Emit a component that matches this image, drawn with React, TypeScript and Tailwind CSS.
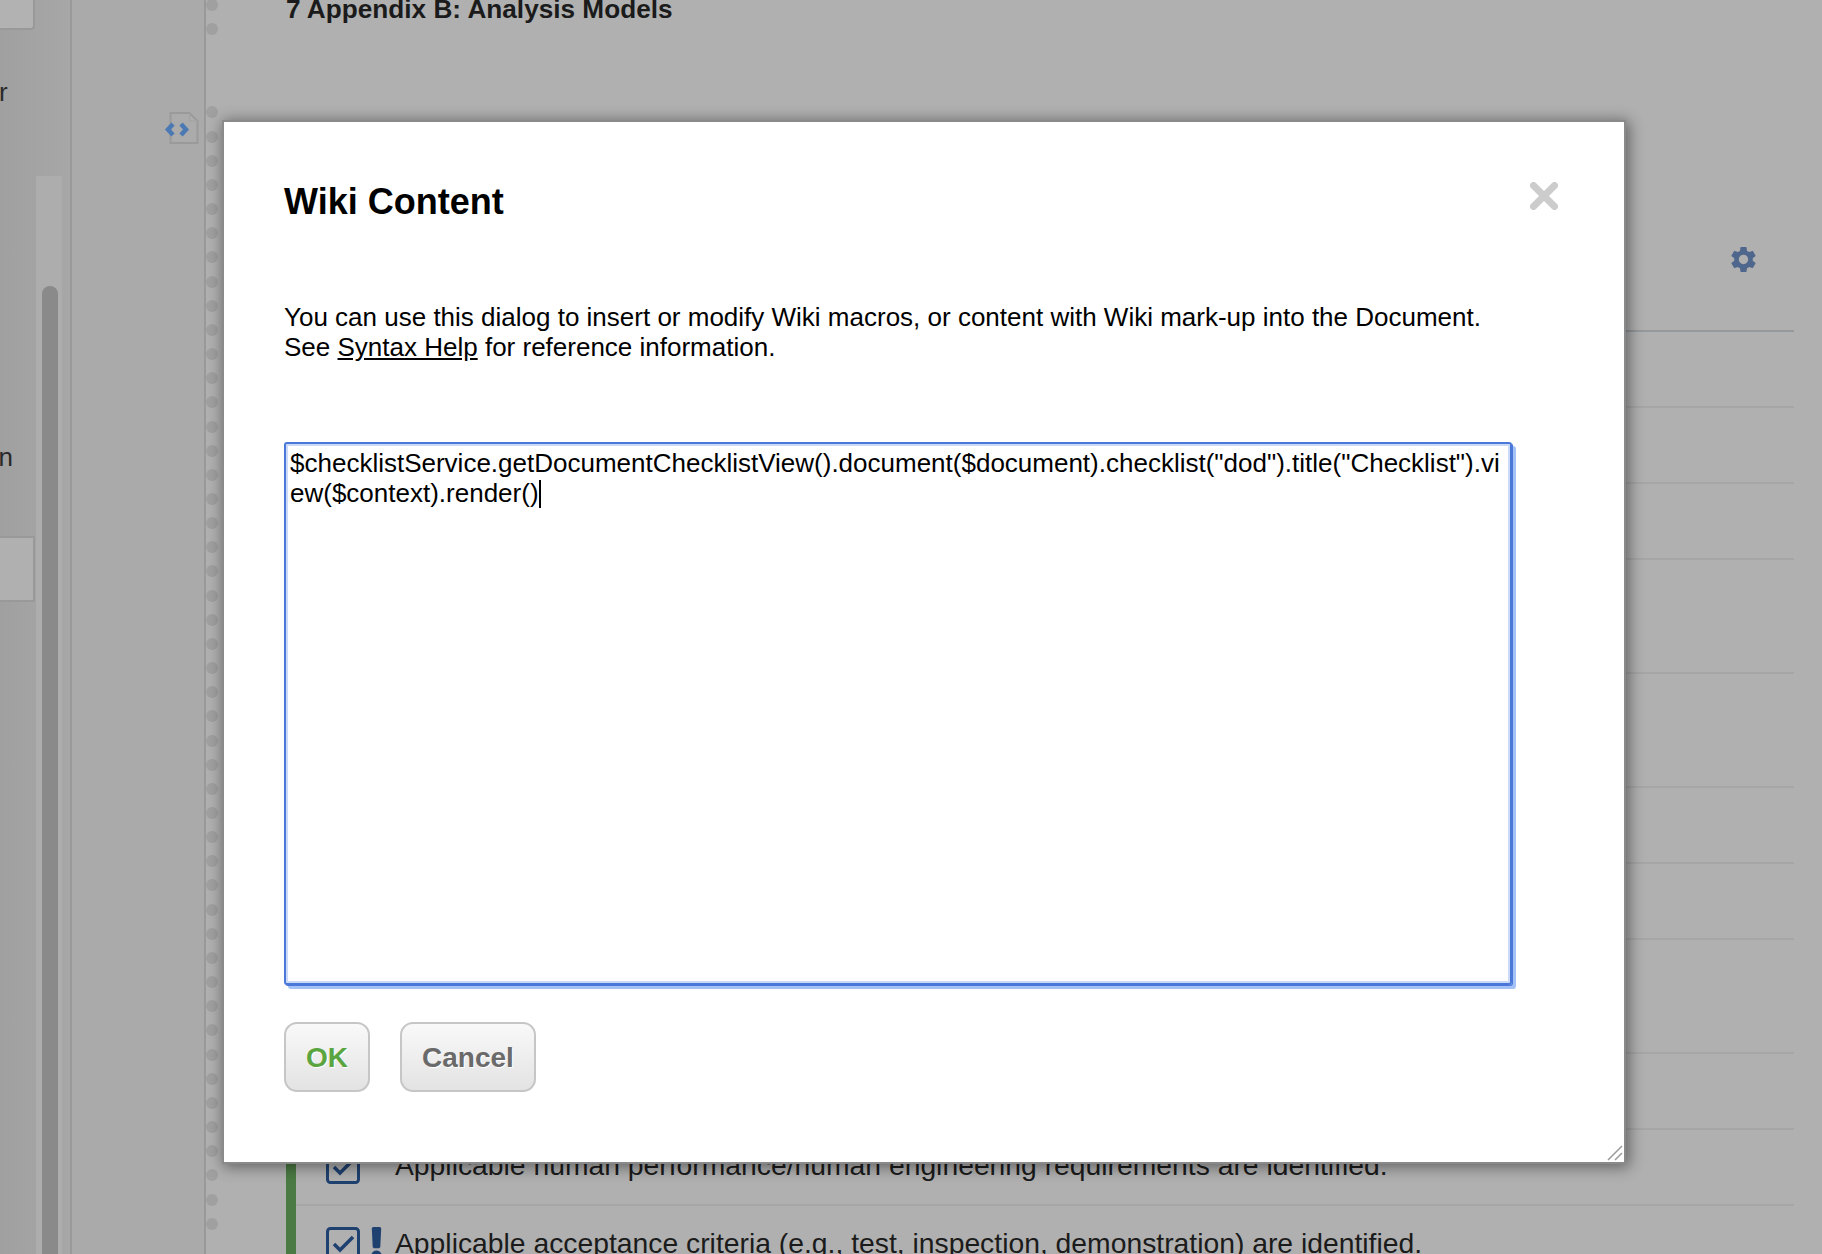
import { FaExclamation } from 'react-icons/fa'
import { MdSettings } from 'react-icons/md'

const FONT = "font-['Liberation_Sans',Arial,sans-serif]"

const topDots = [0, 1]
const dots = Array.from({ length: 47 }, (_, i) => i)

// row heights of the checklist behind the dialog
const rowClasses = [
  'h-[76px]',
  'h-[76px]',
  'h-[76px]',
  'h-[114px]',
  'h-[114px]',
  'h-[76px]',
  'h-[76px]',
  'h-[114px]',
  'h-[76px]',
]

function Check() {
  return (
    <svg viewBox="0 0 34 34" className="h-[34px] w-[34px] shrink-0" fill="none">
      <rect x="1.5" y="1.5" width="31" height="31" rx="3" stroke="#1f4170" strokeWidth="3" />
      <path d="M8 17l6 6L27 10" stroke="#1f4170" strokeWidth="3.5" />
    </svg>
  )
}

function Background() {
  return (
    <div className="flex h-full w-full">
      {/* left navigation panel */}
      <div className="relative w-[70px] shrink-0 bg-gradient-to-r from-[#a0a0a0] to-[#a7a7a7] text-[#2a2a2a]">
        <div className="h-[30px] w-[35px] rounded-br-sm border-r-2 border-b-2 border-[#999999] bg-[#b2b2b2]" />
        <div className="-ml-[1px] mt-[47px] h-[30px] w-[12px] overflow-hidden text-[26px] leading-[30px]">r</div>
        <div className="-ml-[6px] mt-[335px] h-[30px] w-[19px] overflow-hidden text-right text-[26px] leading-[30px]">n</div>
        <div className="mt-[64px] h-[66px] w-[35px] border-y-2 border-r-2 border-[#999999] bg-[#b0b0b0]" />
        {/* scroll track */}
        <div className="absolute bottom-0 left-[36px] top-[176px] w-[26px] bg-[#adadad] pl-[6px] pr-[4px] pt-[110px]">
          <div className="h-full rounded-t-lg bg-[#8a8a8a]" />
        </div>
      </div>

      {/* sidebar */}
      <div className="relative w-[136px] shrink-0 border-l-2 border-r-2 border-[#999999] bg-[#aaaaaa]">
        <svg viewBox="0 0 36 36" className="absolute left-[92px] top-[110px] h-[36px] w-[36px]" fill="none">
          <path d="M6.500 3h19l8 8v22h-27z" fill="#ababab" stroke="#9a9a9a" strokeWidth="2" />
          <path d="M25.500 3v8h8" stroke="#a2a2a2" strokeWidth="1" />
          <path d="M9 14l-5 5.500 5 5.500M17 14l5 5.500-5 5.500" stroke="#4b79b4" strokeWidth="4.500" />
        </svg>
      </div>

      {/* page margin with punched holes */}
      <div className="w-[18px] shrink-0 bg-[#b0b0b0] pr-[6px]">
        <div className="-mt-[1px] flex flex-col items-center gap-[12.17px]">
          {topDots.map((d) => (
            <div key={d} className="h-3 w-3 shrink-0 rounded-full bg-[#a0a0a0]" />
          ))}
          <div className="h-[47px] shrink-0" />
          {dots.map((d) => (
            <div key={d} className="h-3 w-3 shrink-0 rounded-full bg-[#a0a0a0]" />
          ))}
        </div>
      </div>

      {/* document */}
      <div className="min-w-0 flex-1 bg-[#b0b0b0] pl-[62px] pr-[28px] text-[#1b1b1b]">
        <div className="-mt-[5px] h-[29px] text-[26.2px] font-bold leading-[29px]">7 Appendix B: Analysis Models</div>
        <div className="flex h-[306px] justify-end pr-[35px] pt-[220px]">
          <MdSettings className="h-[31px] w-[31px] text-[#4f678c]" />
        </div>
        <div className="border-b-2 border-[#95999c]" />
        {rowClasses.map((c, i) => (
          <div key={i} className={`${c} border-b-2 border-[#a6a6a6]`} />
        ))}
        <div className="flex h-[76px]">
          <div className="h-full w-[10px] bg-[#4b7a44]" />
          <div className="flex flex-1 border-b-2 border-[#a6a6a6] pl-[30px] pt-[20px]">
            <Check />
            <span className="ml-[35px] text-[28.3px] leading-[30px]">
              Applicable human performance/human engineering requirements are identified.
            </span>
          </div>
        </div>
        <div className="flex h-[60px]">
          <div className="h-full w-[10px] bg-[#4b7a44]" />
          <div className="flex pl-[30px] pt-[21px]">
            <Check />
            <div className="ml-[8px] w-[17px] shrink-0">
              <FaExclamation className="h-[34px] w-[17px] text-[#1f4170]" />
            </div>
            <span className="ml-[10px] pt-[1px] text-[28.3px] leading-[30px]">
              Applicable acceptance criteria (e.g., test, inspection, demonstration) are identified.
            </span>
          </div>
        </div>
      </div>
    </div>
  )
}

function WikiDialog() {
  return (
    <div className="absolute left-[224px] top-[122px] flex h-[1040px] w-[1400px] flex-col bg-white pl-[60px] pt-[60px] text-black shadow-[2px_2px_14px_3px_rgba(0,0,0,0.45)] outline-2 outline-[#8a8a8a]">
      <div className="flex items-start justify-between pr-[66px]">
        <h1 className="text-[36px] font-bold leading-[40px]">Wiki Content</h1>
        <svg viewBox="0 0 28 28" className="h-[28px] w-[28px]">
          <path d="M3.500 3.500l21 21M24.500 3.500l-21 21" stroke="#cccccc" strokeWidth="7" strokeLinecap="round" />
        </svg>
      </div>

      <p className="mt-[80px] text-[26px] leading-[30.3px]">
        You can use this dialog to insert or modify Wiki macros, or content with Wiki mark-up into the Document.
        <br />
        See <span className="underline">Syntax Help</span> for reference information.
      </p>

      <div className="mt-[79px] h-[543px] w-[1228px] rounded-[3px] border-2 border-[#4a78d8] px-[4px] pb-[2px] pt-[4px] text-[26px] leading-[30px] shadow-[inset_0_0_0_2px_#cbdaf6,1px_1px_0_0_#4a78d8,4px_4px_0_0_#a5c2f7]">
        <div className="break-all">
          {'$checklistService.getDocumentChecklistView().document($document).checklist("dod").title("Checklist").view($context).render()'}
          <span className="inline-block h-[28px] w-[2px] bg-black align-[-6px]" />
        </div>
      </div>

      <div className="mt-[37px] flex gap-[30px]">
        <button
          type="button"
          className="h-[70px] w-[86px] rounded-[13px] border-2 border-[#c6c6c6] bg-gradient-to-b from-[#f9f9f9] to-[#e3e3e3] pt-[3px] text-[28px] font-bold text-[#5aa53f] [text-shadow:1px_1px_0_#ffffff]"
        >
          OK
        </button>
        <button
          type="button"
          className="h-[70px] w-[136px] rounded-[13px] border-2 border-[#c6c6c6] bg-gradient-to-b from-[#f9f9f9] to-[#e3e3e3] pt-[3px] text-[28px] font-bold text-[#6a6a6a] [text-shadow:1px_1px_0_#ffffff]"
        >
          Cancel
        </button>
      </div>

      {/* resize grip */}
      <svg viewBox="0 0 16 16" className="absolute bottom-[1px] right-[1px] h-4 w-4" fill="none">
        <path d="M1 15L15 1M8 15l7-7" stroke="#9a9a9a" strokeWidth="1.500" />
      </svg>
    </div>
  )
}

export default function App() {
  return (
    <div className={`relative h-[1254px] w-[1822px] overflow-hidden bg-[#b0b0b0] ${FONT}`}>
      <Background />
      <WikiDialog />
    </div>
  )
}
